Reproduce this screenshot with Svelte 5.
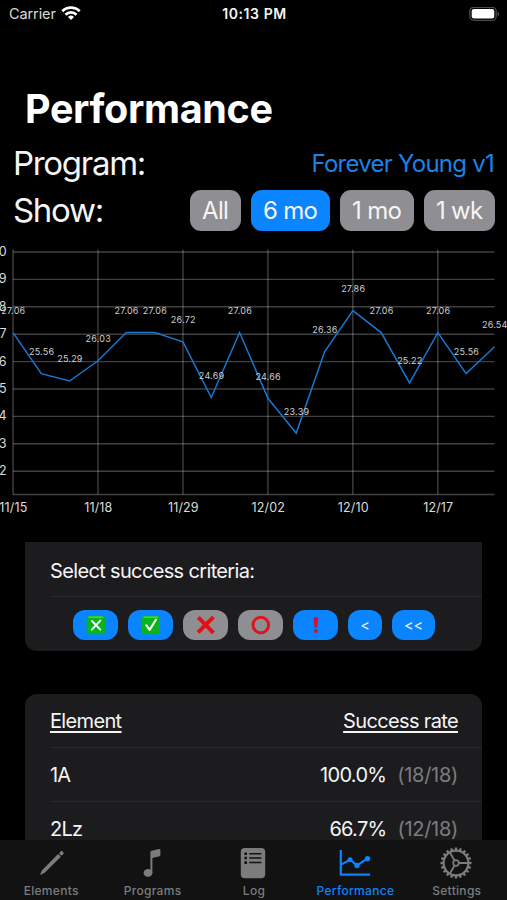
<script>
  let range = $state('6 mo');

  const ranges = ['All', '6 mo', '1 mo', '1 wk'];

  let criteria = $state([
    { id: 'crossBox', on: true },
    { id: 'checkBox', on: true },
    { id: 'cross', on: false },
    { id: 'circle', on: false },
    { id: 'bang', on: true },
    { id: 'under', label: '<', on: true },
    { id: 'downgrade', label: '<<', on: true }
  ]);

  const elements = [
    { name: '1A', rate: '100.0%', count: '(18/18)' },
    { name: '2Lz', rate: '66.7%', count: '(12/18)' }
  ];

  const tabs = ['Elements', 'Programs', 'Log', 'Performance', 'Settings'];
  let activeTab = $state('Performance');

  const scores = [
    27.06, 25.56, 25.29, 26.03, 27.06, 27.06, 26.72, 24.69, 27.06,
    24.66, 23.39, 26.36, 27.86, 27.06, 25.22, 27.06, 25.56, 26.54
  ];
  const dates = ['11/15', '11/18', '11/29', '12/02', '12/10', '12/17'];
  const levels = [30, 29, 28, 27, 26, 25, 24, 23, 22];

  const left = 13;
  const right = 494.5;
  const bottom = 254.5;
  const px = (i) => left + (i * (right - left)) / (scores.length - 1);
  const py = (v) => 12 + (30 - v) * 27.4;
  const line = scores.map((v, i) => `${px(i)},${py(v)}`).join(' ');
  const teeth = Array.from({ length: 20 }, (_, i) => i * 18);
</script>

<div class="screen">
  <div class="status">
    <div class="carrier">
      <span>Carrier</span>
      <svg width="20" height="15" viewBox="0 0 20 15" fill="none" stroke="#fff" stroke-width="2.7">
        <path d="M1.3 5.2a12.3 12.3 0 0 1 17.4 0" />
        <path d="M4.5 8.7a7.8 7.8 0 0 1 11 0" />
        <path d="M10 14l-3-3.1a4.3 4.3 0 0 1 6 0z" fill="#fff" stroke="none" />
      </svg>
    </div>
    <span class="clock">10:13 PM</span>
    <svg class="battery" width="31" height="15" viewBox="0 0 31 15">
      <rect x="0.8" y="0.3" width="26.4" height="13" rx="4" fill="none" stroke="#4c4c4e" stroke-width="1.3" />
      <rect x="2.7" y="2.1" width="22.6" height="9.4" rx="2.2" fill="#fff" />
      <path d="M28.6 4.5v4.8c2.2-.8 2.2-4 0-4.8z" fill="#4c4c4e" />
    </svg>
  </div>

  <h1>Performance</h1>

  <div class="row program">
    <span class="label">Program:</span>
    <button class="link">Forever Young v1</button>
  </div>
  <div class="row show">
    <span class="label">Show:</span>
    <div class="ranges">
      {#each ranges as r}
        <button class="range" class:active={range === r} onclick={() => (range = r)}>{r}</button>
      {/each}
    </div>
  </div>

  <svg class="chart" width="507" height="290" viewBox="0 0 507 290">
    {#each levels as level}
      <line x1={left} x2={right} y1={py(level)} y2={py(level)} class="grid" />
      <text x="6.7" y={py(level) + 4} class="axis" text-anchor="end">{level}</text>
    {/each}
    {#each dates as date, i}
      <line x1={px(i * 3)} x2={px(i * 3)} y1="9.5" y2={bottom} class="grid" />
      <text x={px(i * 3) + 0.4} y="271.5" class="axis" text-anchor="middle">{date}</text>
    {/each}
    <line x1={left} x2={right} y1={bottom} y2={bottom} class="grid" />
    <polyline points={line} fill="none" stroke="#1677d2" stroke-width="1.5" />
    {#each scores as score, i}
      <text x={px(i) + 0.3} y={py(score) - 18.6} class="value" text-anchor="middle">{score.toFixed(2)}</text>
    {/each}
  </svg>

  <section class="card criteria">
    <div class="heading">Select success criteria:</div>
    <div class="pills">
      {#each criteria as c}
        <button class="pill {c.id}" class:active={c.on} aria-label={c.id} onclick={() => (c.on = !c.on)}>
          {#if c.label}
            {c.label}
          {:else}
            <svg width="20" height="20" viewBox="0 0 20 20">
              {#if c.id === 'crossBox'}
                <rect x="0.6" y="1" width="18.4" height="18.2" rx="3" fill="#07b51c" />
                <path d="M2.5 2.2h14.6" stroke="#56cf55" stroke-width="1.5" />
                <path d="M6 6l8.3 8.6M14.3 5.6L5.8 14.6" stroke="#fff" stroke-width="2" stroke-linecap="round" />
              {:else if c.id === 'checkBox'}
                <rect x="0.6" y="1" width="18.4" height="18.2" rx="3" fill="#07b51c" />
                <path d="M2.5 2.2h14.6" stroke="#56cf55" stroke-width="1.5" />
                <path d="M5.2 10.2l3.4 4.7L15 4.6" fill="none" stroke="#fff" stroke-width="2" stroke-linecap="round" stroke-linejoin="round" />
              {:else if c.id === 'cross'}
                <path d="M2.3 2.3l15.2 15.6M17.4 2L2.2 17.4" stroke="#e90d12" stroke-width="3.9" />
              {:else if c.id === 'circle'}
                <circle cx="9.8" cy="10" r="7.8" fill="none" stroke="#dc161b" stroke-width="3" />
              {:else}
                <path d="M7.3 3.6q0-1.6 2.5-1.6t2.5 1.6L11 12.7H8.8z" fill="#d51225" />
                <circle cx="9.9" cy="15.9" r="2" fill="#d51225" />
              {/if}
            </svg>
          {/if}
        </button>
      {/each}
    </div>
  </section>

  <section class="card rates">
    <div class="entry head">
      <span>Element</span>
      <span>Success rate</span>
    </div>
    {#each elements as el}
      <div class="entry">
        <span class="name">{el.name}</span>
        <span class="rate">{el.rate}<span class="count">{el.count}</span></span>
      </div>
    {/each}
  </section>

  <nav>
    {#each tabs as tab}
      <button class="tab" class:active={activeTab === tab} onclick={() => (activeTab = tab)}>
        <svg width="34" height="34" viewBox="0 0 34 34" fill="none" stroke="currentColor">
          {#if tab === 'Elements'}
            <path d="M24 7.9l2.9 2.9L10.4 27l-4.4 2 1.9-4.6z" fill="currentColor" stroke="none" />
            <path d="M27.4 7.4l.2-.2" stroke-width="4" stroke-linecap="round" />
          {:else if tab === 'Programs'}
            <ellipse cx="13" cy="27" rx="4.4" ry="3.9" fill="currentColor" stroke="none" />
            <path d="M15.4 27V6q0-1 1.3-1.3L24 3.1q1.4-.2 1.4 1V9q0 1-1 1.3l-7 1.6V27z" fill="currentColor" stroke="none" />
          {:else if tab === 'Log'}
            <rect x="4.8" y="2" width="24.4" height="30.2" rx="4" fill="currentColor" stroke="none" />
            <path d="M13.2 7.7h12.2M13.2 12h12.2M13.2 16.6h12.2" stroke="#121212" stroke-width="1.5" />
            <path d="M8.4 7.7h2.6M8.4 12h2.6M8.4 16.6h2.6" stroke="#121212" stroke-width="2.6" />
          {:else if tab === 'Performance'}
            <path d="M2.8 4v24.6h29.4" stroke-width="2.2" stroke-linejoin="round" />
            <path d="M3.2 18.7l8.9-5 6.9 5.7 10.6-7" stroke-width="2.1" />
            <g fill="currentColor" stroke="none">
              <circle cx="12.1" cy="13.8" r="2.5" />
              <circle cx="19" cy="19.5" r="2.7" />
              <circle cx="29.5" cy="12.8" r="2.7" />
            </g>
          {:else}
            <circle cx="17" cy="17" r="12.4" stroke-width="2.2" />
            <circle cx="17" cy="17" r="2.8" stroke-width="1.7" />
            <path d="M19.9 17H29M15.5 14.5L10.8 6.3M15.5 19.5l-4.7 8.2" stroke-width="1.8" />
            {#each teeth as angle}
              <path d="M17 1.5v3" stroke-width="2.4" transform="rotate({angle} 17 17)" />
            {/each}
          {/if}
        </svg>
        <span>{tab}</span>
      </button>
    {/each}
  </nav>
</div>

<style>
  :global(body) {
    background: #000;
  }

  .screen {
    width: 507px;
    height: 900px;
    display: flex;
    flex-direction: column;
    overflow: hidden;
    background: #000;
    color: #f5f5f5;
    font-family: Inter, 'Liberation Sans', sans-serif;
    font-size: 20px;
    line-height: 1;
  }

  .screen > * {
    flex-shrink: 0;
  }

  button {
    border: 0;
    padding: 0;
    background: none;
    color: inherit;
    font: inherit;
    cursor: pointer;
  }

  .status {
    height: 28px;
    display: grid;
    grid-template-columns: 1fr auto 1fr;
    align-items: center;
    padding: 0 7px 0 9px;
    font-size: 14.5px;
  }

  .carrier {
    display: flex;
    align-items: center;
    gap: 5px;
    color: #d8d8d8;
    letter-spacing: -0.1px;
  }

  .carrier svg {
    margin-top: -2px;
  }

  .clock {
    font-weight: 600;
    font-size: 14px;
    letter-spacing: 0.6px;
  }

  .battery {
    justify-self: end;
  }

  h1 {
    height: 62px;
    margin: 50px 0 0 25px;
    padding-top: 12px;
    box-sizing: border-box;
    color: #fff;
    font-size: 39.5px;
    font-weight: 700;
    letter-spacing: -0.35px;
  }

  .row {
    display: flex;
    align-items: center;
    justify-content: space-between;
    padding: 0 12px 0 13px;
  }

  .program {
    height: 47px;
  }

  .show {
    height: 47px;
  }

  .label {
    font-size: 33px;
    letter-spacing: -1.3px;
  }

  .link {
    padding-right: 1px;
    color: #1b82e8;
    font-size: 24px;
    letter-spacing: -0.75px;
  }

  .ranges {
    display: flex;
    gap: 10px;
  }

  .range {
    height: 41px;
    padding: 1px 12.5px 0 12.3px;
    border-radius: 11px;
    background: #8e8e93;
    font-size: 24px;
    letter-spacing: -0.7px;
    white-space: nowrap;
  }

  .range.active,
  .pill.active {
    background: #0a84ff;
  }

  .chart {
    display: block;
    margin-top: 6px;
  }

  .grid {
    stroke: #fff;
    stroke-opacity: 0.25;
    stroke-width: 1.4;
  }

  .axis {
    fill: #dcdcdc;
    font-size: 12.5px;
    letter-spacing: 0.15px;
  }

  .value {
    fill: #cfcfcf;
    font-size: 9px;
    letter-spacing: 0.2px;
  }

  .card {
    width: 457px;
    margin-left: 25px;
    background: #1c1c1e;
    letter-spacing: -0.65px;
  }

  .criteria {
    height: 109px;
    margin-top: 12px;
    border-radius: 0 0 12px 12px;
  }

  .heading {
    height: 55px;
    box-sizing: border-box;
    margin-left: 25px;
    padding-top: 19px;
    border-bottom: 1px solid #29292b;
  }

  .pills {
    display: flex;
    gap: 10px;
    padding: 13px 0 0 48px;
  }

  .pill {
    width: 45px;
    height: 30px;
    display: flex;
    align-items: center;
    justify-content: center;
    border-radius: 12px;
    background: #8e8e93;
    font-size: 14.5px;
  }

  .pill.under {
    width: 34px;
  }

  .pill.downgrade {
    width: 43px;
  }

  .rates {
    height: 146px;
    margin-top: 43px;
    border-radius: 12px 12px 0 0;
    overflow: hidden;
  }

  .entry {
    height: 54px;
    box-sizing: border-box;
    display: flex;
    align-items: center;
    justify-content: space-between;
    margin-left: 25px;
    padding-right: 24px;
    border-bottom: 1px solid #29292b;
  }

  .head {
    text-decoration: underline;
    text-underline-offset: 3px;
    text-decoration-thickness: 1.5px;
  }

  .name {
    letter-spacing: -0.8px;
  }

  .rate {
    letter-spacing: -0.7px;
  }

  .count {
    margin-left: 11px;
    color: #7c7c80;
    letter-spacing: -0.3px;
  }

  nav {
    height: 60px;
    display: grid;
    grid-template-columns: repeat(5, 1fr);
    background: #121212;
    color: #7c7c7c;
  }

  .tab {
    display: flex;
    flex-direction: column;
    align-items: center;
    padding-top: 6px;
    font-size: 12px;
    font-weight: 500;
    letter-spacing: 0.3px;
  }

  .tab span {
    margin-top: 5px;
    padding-left: 1px;
  }

  .tab.active {
    color: #0a84ff;
  }
</style>
